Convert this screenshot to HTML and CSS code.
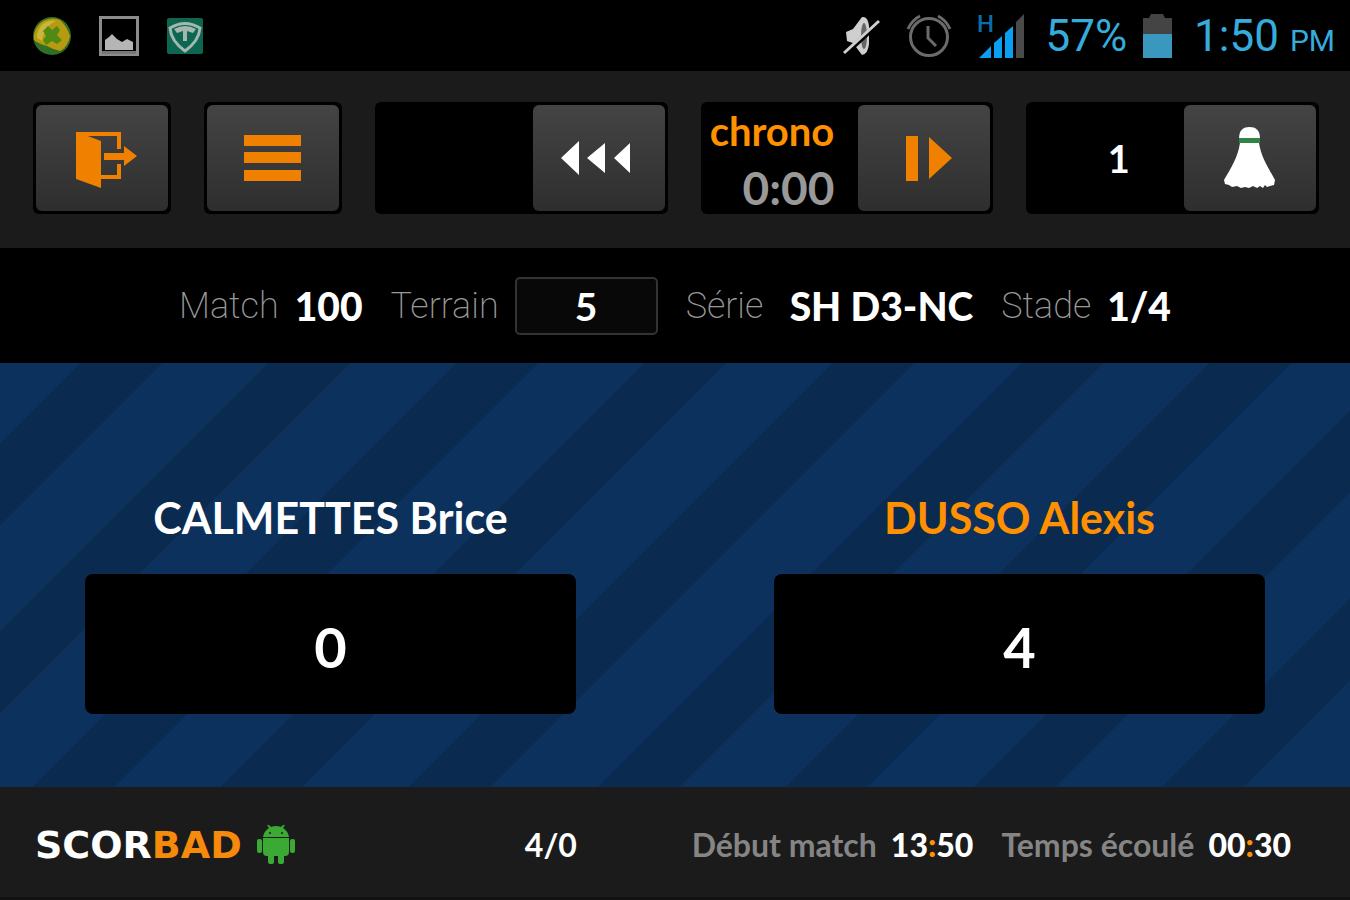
FILE: index.html
```html
<!DOCTYPE html>
<html lang="fr">
<head>
    <meta charset="utf-8">
    <title>Scorbad</title>
    <link rel="stylesheet" href="styles.css">
</head>
<body>
    <div class="statusbar">
        <div class="notifications">
            <svg width="38" height="38" viewBox="0 0 38 38">
                <circle cx="19" cy="19" r="19" fill="#2f6f26"/>
                <path d="M1 23A19 19 0 0 1 27 3Q34 9 37 19Q35 30 27 34Q21 33 14 29Q6 27 1 23Z" fill="#b89a10"/>
                <path d="M4 21A16 16 0 0 1 23 4Q12 8 9 24Z" fill="#c8b83a"/>
                <path d="M15 9l4 4 5-4 3 4-3 5 5 5-5 4-5-3-6 4-3-5 3-4-3-5z" fill="#4f8a12"/>
            </svg>
            <svg width="40" height="40" viewBox="0 0 40 40">
                <rect x="1.5" y="1.5" width="37" height="37" fill="#000" stroke="#8c8c8c" stroke-width="3"/>
                <path d="M6 34V24l4-3 3-3 5 5 5 3 5-3 6 3v8z" fill="#b5b5b5"/>
                <path d="M3 35h34v3H3z" fill="#777"/>
            </svg>
            <svg width="36" height="36" viewBox="0 0 36 36">
                <rect width="36" height="36" rx="2" fill="#0d6650"/>
                <path d="M3 10Q18 1 33 10Q32 23 18 33Q4 23 3 10Z" fill="none" stroke="#a5b8b0" stroke-width="3"/>
                <path d="M7 11Q18 5 29 11L26 15L20 13V23H16V13L10 15Z" fill="#a5b8b0"/>
            </svg>
        </div>
        <div class="system">
            <svg class="mute" width="38" height="42" viewBox="0 0 38 42">
                <path d="M3 17l7-3 9-12q6-1 7 9v18q-1 10-7 11l-9-12-6-2z" fill="#cfcfcf"/>
                <ellipse cx="21" cy="21" rx="3" ry="13" fill="#666"/>
                <path d="M2 39L37 7" stroke="#000" stroke-width="5"/>
                <path d="M1 38L36 6" stroke="#cfcfcf" stroke-width="3"/>
            </svg>
            <svg class="alarm" width="46" height="44" viewBox="0 0 46 44">
                <g fill="none" stroke="#6b6b6b" stroke-width="3">
                    <circle cx="23" cy="23" r="18.5"/>
                    <path d="M22 12v12l8 8M2 15Q6 6 14 2M44 15Q40 6 32 2"/>
                </g>
            </svg>
            <svg class="signal" width="48" height="48" viewBox="0 0 48 48">
                <text x="0" y="20" class="network">H</text>
                <path d="M2 46l12-12v12zM17 31l8-7v22h-8zM28 21l8-7v32h-8z" fill="#0a9ff0"/>
                <path d="M39 10l8-8v44h-8z" fill="#4a4a4a"/>
            </svg>
            <span>57%</span>
            <svg class="battery" width="29" height="44" viewBox="0 0 29 44">
                <path d="M0 4h6l2-4h12l2 4h7v17H0z" fill="#444"/>
                <path d="M0 20h29v24H0z" fill="#3a98bf"/>
            </svg>
            <span class="clock">1:50 <small>PM</small></span>
        </div>
    </div>

    <div class="toolbar">
        <div class="tool">
            <button type="button" aria-label="Quitter">
                <svg width="80" height="64" viewBox="0 0 80 64" fill="#f08000">
                    <path d="M14 6H59V23H55V10H26L39 15V62L14 53Z"/>
                    <path d="M39 49H55V38H59V53H39Z"/>
                    <path d="M42 27H62V20L75 30L62 40V34H42Z"/>
                </svg>
            </button>
        </div>
        <div class="tool">
            <button type="button" aria-label="Menu">
                <svg width="80" height="64" viewBox="0 0 80 64" fill="#f08000">
                    <path d="M11 9h57v11H11zM11 26h57v11H11zM11 44h57v11H11z"/>
                </svg>
            </button>
        </div>
        <div class="tool wide">
            <div class="display"></div>
            <button type="button" aria-label="Retour">
                <svg width="80" height="64" viewBox="0 0 80 64" fill="#fff">
                    <path d="M2 32L20 15V49ZM28 32L46 17V47ZM55 32L71 17V47Z"/>
                </svg>
            </button>
        </div>
        <div class="tool wide">
            <div class="display chrono">
                <span class="chrono-label">chrono</span>
                <span class="chrono-time">0:00</span>
            </div>
            <button type="button" aria-label="Chrono">
                <svg width="80" height="64" viewBox="0 0 80 64" fill="#f08000">
                    <path d="M22 10h12v45H22zM45 11L68 32L45 53Z"/>
                </svg>
            </button>
        </div>
        <div class="tool wide">
            <div class="display shuttles">1</div>
            <button type="button" aria-label="Volant">
                <svg width="80" height="64" viewBox="0 0 80 64" fill="#fff">
                    <path d="M29 13C29 4 33 1 39.500 1S50 4 50 13Z"/>
                    <path d="M30 17H49C51 31 59 43 65 54L64 59L60 60L57 61L55 59L53 62L50 60L47 62L43 60L39 62L35 61L31 62L27 60L22 61L19 59L15 58L14 54C21 42 28 31 30 17Z"/>
                    <path d="M29 12h21v5H29z" fill="#2f8545"/>
                </svg>
            </button>
        </div>
    </div>

    <div class="infos">
        <div class="info"><span>Match</span><strong>100</strong></div>
        <div class="info">
            <label for="terrain">Terrain</label>
            <input type="text" id="terrain" name="terrain" value="5">
        </div>
        <div class="info"><span>Série</span><strong>SH D3-NC</strong></div>
        <div class="info"><span>Stade</span><strong>1/4</strong></div>
    </div>

    <div class="court">
        <div class="player">
            <h2>CALMETTES Brice</h2>
            <button type="button" class="score">0</button>
        </div>
        <div class="player serving">
            <h2>DUSSO Alexis</h2>
            <button type="button" class="score">4</button>
        </div>
    </div>

    <div class="footer">
        <div class="brand">
            <span>SCOR<b>BAD</b></span>
            <svg width="40" height="40" viewBox="0 0 40 40" fill="#3aaa35">
                <path d="M7 12Q8 6 13 3L11 0H13L15 2Q20 0 25 2L27 0H29L27 3Q32 6 33 12Z"/>
                <path d="M7 13H33V27Q33 31 29 31H28V37Q28 39 25 39T22 37V31H18V37Q18 39 15 39T12 37V31H11Q7 31 7 27Z"/>
                <rect x="1" y="14" width="5" height="14" rx="2"/>
                <rect x="34" y="14" width="5" height="14" rx="2"/>
                <circle cx="14" cy="8" r="1" fill="#1b1b1b"/>
                <circle cx="26" cy="8" r="1" fill="#1b1b1b"/>
            </svg>
        </div>
        <div class="sets">4/0</div>
        <div class="times">
            <div class="time"><span>Début match</span><strong>13<i>:</i>50</strong></div>
            <div class="time"><span>Temps écoulé</span><strong>00<i>:</i>30</strong></div>
        </div>
    </div>
</body>
</html>
```

FILE: styles.css
```css
* {
    box-sizing: border-box;
}
body {
    margin: 0;
    min-height: 100vh;
    display: flex;
    flex-direction: column;
    background: #000;
    color: #fff;
    font-family: Lato, sans-serif;
    font-weight: bold;
}
button, input {
    font: inherit;
    color: inherit;
}
button {
    padding: 0;
    border: none;
    cursor: pointer;
}
svg {
    display: block;
}

/* Android status bar */
.statusbar {
    display: flex;
    justify-content: space-between;
    align-items: center;
    height: 71px;
    padding: 0 15px 0 33px;
    font-family: Roboto, sans-serif;
    font-weight: 400;
    font-size: 44px;
    color: #36acdc;
}
.notifications, .system {
    display: flex;
    align-items: center;
}
.notifications {
    gap: 28px;
}
.mute, .alarm {
    margin-right: 25px;
}
.signal {
    margin-right: 20px;
}
.network {
    font-size: 24px;
    font-weight: 500;
    fill: #0a6ea8;
}
.battery {
    margin: 0 22px 0 16px;
}
.clock small {
    font-size: 30px;
}

/* Buttons */
.toolbar {
    display: flex;
    gap: 33px;
    padding: 31px 31px 34px 33px;
    background: #1b1b1b;
}
.tool {
    display: flex;
    padding: 3px;
    background: #000;
    border-radius: 6px;
}
.wide {
    flex: 1;
}
.tool button {
    display: flex;
    align-items: center;
    justify-content: center;
    width: 132px;
    height: 106px;
    border-radius: 6px;
    background: linear-gradient(#444, #2e2e2e);
}
.display {
    flex: 1;
    display: flex;
    align-items: center;
    justify-content: center;
}
.chrono {
    flex-direction: column;
    align-items: flex-end;
    gap: 11px;
    padding: 3px 24px 0 0;
    line-height: 46px;
}
.chrono-label {
    font-size: 40px;
    color: #ff9000;
}
.chrono-time {
    font-size: 46px;
    color: #999;
}
.shuttles {
    padding-left: 24px;
    font-size: 38px;
}

/* Match infos */
.infos {
    display: flex;
    align-items: center;
    justify-content: center;
    gap: 28px;
    height: 115px;
    font-size: 39px;
}
.info {
    display: flex;
    align-items: center;
    gap: 16px;
}
.info span, .info label {
    font-family: Roboto, sans-serif;
    font-size: 36px;
    font-weight: 200;
    color: #999;
}
.info span {
    min-width: 88px;
}
.info input {
    width: 143px;
    height: 58px;
    padding: 0;
    text-align: center;
    background: #080808;
    border: 2px solid #333;
    border-radius: 5px;
}

.court {
    flex: 1;
    display: flex;
    align-items: flex-end;
    gap: 198px;
    padding: 73px 85px;
    background: repeating-linear-gradient(135deg,
        #0b315c 0, #0b315c 57px,
        #0b2a50 57px, #0b2a50 115px,
        #0b315c 115px, #0b315c 133px);
}
.player {
    flex: 1;
    text-align: center;
}
.player h2 {
    margin: 0 0 30px;
    font-size: 43px;
    line-height: 52px;
}
.serving h2 {
    color: #ff9000;
}
.score {
    display: block;
    width: 100%;
    height: 140px;
    padding-top: 4px;
    background: #000;
    border-radius: 8px;
    font-size: 56px;
}

.footer {
    display: flex;
    align-items: center;
    height: 113px;
    padding: 5px 59px 0 35px;
    background: #1b1b1b;
    border-bottom: 3px solid #121212;
    font-size: 32px;
}
.brand {
    display: flex;
    align-items: center;
    gap: 14px;
    width: 39%;
    font-family: "DejaVu Sans", sans-serif;
    font-size: 38px;
}
.brand b {
    color: #f58a0c;
}
.times {
    display: flex;
    gap: 28px;
    margin-left: auto;
}
.time {
    display: flex;
    gap: 14px;
}
.time span {
    color: #858585;
}
.time i {
    font-style: normal;
    color: #ff9000;
}
```
